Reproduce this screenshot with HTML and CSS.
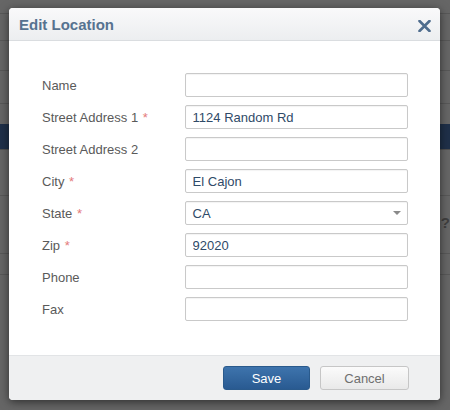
FILE: index.html
```html
<!DOCTYPE html>
<html lang="en">
<head>
    <meta charset="UTF-8">
    <title>Edit Location</title>
    <link rel="stylesheet" href="styles.css">
</head>
<body>
    <!-- page behind the overlay -->
    <div class="page">
        <div class="page-row h14"></div>
        <div class="page-row h26"></div>
        <div class="page-row h30"></div>
        <div class="page-row h33"></div>
        <div class="page-gap h20"></div>
        <div class="page-nav"></div>
        <div class="page-row h46"></div>
        <div class="page-row h58"><span class="page-help">?</span></div>
        <div class="page-row h20"></div>
    </div>

    <div class="modal">
        <div class="modal-header">
            <h2>Edit Location</h2>
            <svg class="close" width="13" height="12" viewBox="0 0 13 12">
                <path d="M1.5 1 L11.5 11 M11.5 1 L1.5 11" stroke="#4f6d8e" stroke-width="2.6" stroke-linecap="round"/>
            </svg>
        </div>
        <div class="modal-body">
            <div class="field">
                <label>Name</label>
                <input type="text" value="">
            </div>
            <div class="field">
                <label>Street Address 1 <span class="req">*</span></label>
                <input type="text" value="1124 Random Rd">
            </div>
            <div class="field">
                <label>Street Address 2</label>
                <input type="text" value="">
            </div>
            <div class="field">
                <label>City <span class="req">*</span></label>
                <input type="text" value="El Cajon">
            </div>
            <div class="field">
                <label>State <span class="req">*</span></label>
                <div class="select">
                    <span>CA</span>
                    <span class="caret"></span>
                </div>
            </div>
            <div class="field">
                <label>Zip <span class="req">*</span></label>
                <input type="text" value="92020">
            </div>
            <div class="field">
                <label>Phone</label>
                <input type="text" value="">
            </div>
            <div class="field">
                <label>Fax</label>
                <input type="text" value="">
            </div>
        </div>
        <div class="modal-footer">
            <button class="btn btn-save">Save</button>
            <button class="btn btn-cancel">Cancel</button>
        </div>
    </div>
</body>
</html>
```

FILE: styles.css
```css
body {
    margin: 0;
    height: 410px;
    overflow: hidden;
    background: #666;
    font-family: "Liberation Sans", Arial, sans-serif;
    font-size: 13px;
    position: relative;
}
.page {
    display: flex;
    flex-direction: column;
}
.page-row {
    border-bottom: 1px solid #585858;
    position: relative;
}
.h14 { height: 13px; }
.h26 { height: 26px; }
.h30 { height: 29px; }
.h33 { height: 32px; }
.h20 { height: 20px; }
.h46 { height: 45px; }
.h58 { height: 57px; }
.page-nav {
    height: 25px;
    background: #1f3049;
    border-bottom: 1px solid #4f4f4f;
}
.page-help {
    position: absolute;
    right: 0;
    top: 18px;
    color: #3f3f3f;
    font-weight: bold;
    font-size: 15px;
}
.modal {
    position: absolute;
    left: 9px;
    top: 8px;
    width: 431px;
    height: 392px;
    background: white;
    border-radius: 4px;
    box-shadow: 0 2px 10px rgba(0,0,0,0.55);
    display: flex;
    flex-direction: column;
    overflow: hidden;
}
.modal-header {
    height: 32px;
    border-bottom: 1px solid #dadde0;
    background: linear-gradient(#f9f9fa, #eceef0);
    display: flex;
    align-items: center;
    justify-content: space-between;
    padding: 0 9px 0 10px;
}
.modal-header h2 {
    margin: 0;
    font-size: 15px;
    font-weight: bold;
    color: #567290;
}
.close {
    display: block;
    margin-top: 4px;
}
.modal-body {
    flex: 1;
    padding: 32px 32px 0 33px;
    display: flex;
    flex-direction: column;
    gap: 8px;
}
.field {
    display: flex;
    align-items: center;
    height: 24px;
}
.field label {
    width: 143px;
    color: #5a5a5a;
}
.req {
    color: #e47a7a;
    margin-left: 1px;
}
.field input,
.select {
    box-sizing: border-box;
    width: 224px;
    height: 24px;
    border: 1px solid #c9c9c9;
    border-radius: 2px;
    padding: 0 7px;
    font-family: inherit;
    font-size: 13px;
    color: #2f4a68;
    box-shadow: inset 0 1px 1px rgba(0,0,0,0.05);
    margin: 0;
}
.select {
    display: flex;
    align-items: center;
    justify-content: space-between;
    padding-right: 6px;
}
.caret {
    width: 0;
    height: 0;
    border-left: 4px solid transparent;
    border-right: 4px solid transparent;
    border-top: 4px solid #8a8a8a;
}
.modal-footer {
    height: 45px;
    box-sizing: border-box;
    border-top: 1px solid #e2e4e6;
    background: #eff0f1;
    display: flex;
    justify-content: flex-end;
    align-items: flex-start;
    gap: 10px;
    padding: 10px 31px 0 0;
}
.btn {
    height: 24px;
    font-family: inherit;
    font-size: 13px;
    border-radius: 3px;
    cursor: pointer;
    padding: 0;
}
.btn-save {
    width: 87px;
    color: white;
    border: 1px solid #2a5a8c;
    background: linear-gradient(#3e74ad, #295a91);
}
.btn-cancel {
    width: 89px;
    color: #6f6f6f;
    border: 1px solid #c6c6c6;
    background: linear-gradient(#fbfbfb, #e9e9e9);
}
```
